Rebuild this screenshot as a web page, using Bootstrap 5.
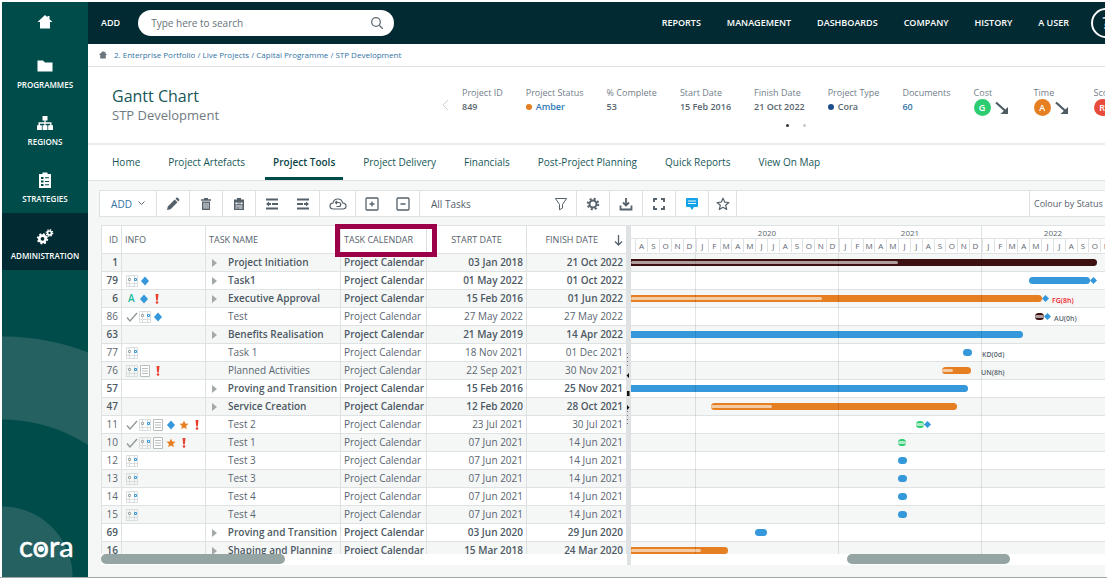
<!DOCTYPE html>
<html lang="en">
<head>
<meta charset="utf-8">
<meta name="viewport" content="width=device-width, initial-scale=1">
<title>Gantt Chart - STP Development</title>
<link href="https://cdn.jsdelivr.net/npm/bootstrap@5.3.0/dist/css/bootstrap.min.css" rel="stylesheet">
<style>
:root{--teal:#004c4b;--navy:#022a33;--line:#dfe2e2;--stripe:#f5f7f7;--ink:#5a6670;--blue:#3498db;--link:#3374a5}
body{font-family:"Open Sans","Noto Sans",sans-serif;font-size:10px;line-height:14px;color:var(--ink);background:#fff}
a{text-decoration:none;color:inherit}
button,select,input{font:inherit;color:inherit;border:0;background:none;padding:0}
svg{display:block;flex:none}
.app-shell{padding:2px 2px 0 2px;border-bottom:1px solid #a2a7a7}

/* sidebar */
.side-nav{width:86px;flex:none;color:#fff;background:radial-gradient(circle at 0 100%,#266161 70px,var(--teal) 71px,var(--teal) 157px,#266161 158px,#266161 240px,var(--teal) 241px)}
.side-link{height:57px;padding-top:15px;gap:4px;font-size:8px;font-weight:600;line-height:12px}
.side-link svg{width:18px;height:18px}
.side-link.home-link{height:40px;padding-top:11px}
.side-link.current{background:var(--navy)}
.brand-logo{font-family:Lato,sans-serif;font-size:29px;line-height:30px;margin:0 0 16px 17px;-webkit-text-stroke:.5px #fff}
.brand-o{position:relative}
.brand-o::after{content:"";position:absolute;left:50%;top:50%;width:6px;height:6px;margin:0 0 0 -3px;border-radius:50%;background:#fff}

/* top bar */
.top-bar{height:42px;flex:none;background:var(--navy);color:#fff;font-size:9px;font-weight:600;padding-left:13px}
.search-box{width:256px;height:26px;border-radius:13px;background:#fff;margin-left:18px;padding:0 10px 0 13px;color:#5f6b74}
.search-box input{outline:0;font-size:10px;font-weight:400}
.search-box input::placeholder{color:#66727a;opacity:1}
.top-menu{gap:26px}
.help-btn{width:30px;height:30px;flex:none;border:2px solid #fff;border-radius:50%;font-size:17px;line-height:24px;font-weight:400;margin:0 -16px 0 22px}
.crumbs{height:23px;flex:none;border-bottom:1px solid var(--line);padding-left:10px;gap:6px;font-size:8px;color:var(--link)}

/* heading strip */
.head-strip{height:78px;flex:none;border-bottom:2px solid #eaecec;padding-left:24px}
.head-title{flex:0 0 330px;padding-top:19px}
.head-title h1{font-size:16px;line-height:20px;font-weight:400;color:#165757;margin:0}
.head-title p{font-size:13px;line-height:18px;color:#6f7a82;margin:0}
.facts{gap:23px;margin-left:13px;padding-top:19px;font-size:9px;white-space:nowrap}
.facts>div{flex:none}
.facts dt{font-weight:400;color:#74808a;line-height:13px}
.facts dd{margin:0;font-weight:600;line-height:16px;gap:4px}
.facts .rag-fact{width:37px}
.status-dot{width:6px;height:6px;border-radius:50%}
.rag{width:17px;height:17px;border-radius:50%;color:#fff;line-height:17px;text-align:center;flex:none}
.pager{gap:14px;margin:8px 0 0 38px}
.pager i{width:3px;height:3px;border-radius:50%;background:#c6cacc}
.pager i:first-child{background:#333}

/* tabs */
.tab-row{height:36px;flex:none;border-bottom:1px solid var(--line);padding-left:16px;gap:12px}
.tab-row a{padding:0 8px;line-height:35px;color:#165757}
.tab-row a.current{font-weight:600;color:#0c4444;box-shadow:inset 0 -3px var(--teal)}

/* toolbar */
.work-area{background:var(--stripe);padding:9px 0 12px 11px}
.tool-row{height:27px;flex:none;background:#fff;border:1px solid var(--line);border-right:0}
.tool-cell{border-right:1px solid var(--line);width:33px;color:#55616b}
.tool-cell.w-pair{width:64px;gap:17px}
.tool-cell.w-add{width:57px;gap:6px;color:var(--link)}
.tool-cell.w-cloud{width:36px}
.tool-cell.w-filter{width:157px;padding:0 8px 0 11px}
.tool-cell.w-star{width:28px}
.tool-cell.w-colour{width:76px;padding-left:4px;font-size:9px;border:0;border-left:1px solid var(--line)}
select.plain{appearance:none;outline:0}

/* grid */
.gantt{margin:8px 0 0 2px;position:relative;background:#fff;min-height:0}
.task-pane{flex:0 0 525px}
.pane-view{overflow:hidden;border-top:1px solid var(--line)}
.task-table{table-layout:fixed;width:526px;border-collapse:separate;border-spacing:0;border-left:1px solid var(--line);white-space:nowrap}
.task-table th,.task-table td{border-right:1px solid var(--line);border-bottom:1px solid var(--line);padding:0 3px;overflow:hidden;height:18px;line-height:17px}
.task-table th{height:28px;font-size:9px;font-weight:400;color:#55616b}
.task-table tbody tr:nth-child(odd),.bar-line:nth-child(odd){background:var(--stripe)}
.task-table .parent-row{font-weight:600;color:#4d5963}
.num-cell{text-align:right}
.name-gap{width:16px;padding-left:3px;margin-right:3px}
.info-icons{gap:1px;margin-left:1px}
.splitter{width:4px;flex:none;background:#dfe2e2;color:#111}
.grip{position:absolute;left:524px;top:120px;width:5px;height:80px}
.scroll-lane{height:11px;flex:none}
.scroll-thumb{height:10px;border-radius:5px;background:#95a5a4}
.marker-box{position:absolute;left:234px;top:-1px;width:102px;height:33px;border:5px solid #9c0048}

/* timeline */
.year-block{width:143px;flex:none;height:28px;border-right:1px solid var(--line);border-bottom:1px solid var(--line);font-size:8px}
.year-block.tail{width:65px}
.year-name{height:13px;line-height:13px;border-bottom:1px solid var(--line)}
.month-cell{flex:1 0 11px;border-left:1px solid var(--line);text-align:center;line-height:13px}
.tail .month-cell{flex:0 0 12px}
.bar-line{height:18px;border-bottom:1px solid var(--line)}
.bar{height:7px;border-radius:4px;flex:none;padding:2px 0}
.bar.from-left{border-radius:0 4px 4px 0}
.bar-done{height:3px;border-radius:2px;background:rgba(255,255,255,.6)}
.milestone{width:5px;height:5px;background:var(--blue);transform:rotate(45deg);margin-left:1px;flex:none}
.bar-note{font-size:7px;font-weight:600;line-height:9px;padding-top:4px}
.year-rules{position:absolute;inset:28px 0 0 0;pointer-events:none}
.year-rules i{width:143px;flex:none;border-right:1px solid rgba(0,0,0,.1)}
.year-rules i:first-child{width:65px}
</style>
</head>
<body>
<svg width="0" height="0" class="position-absolute" aria-hidden="true">
  <symbol id="i-home" viewBox="0 0 18 18"><path fill="currentColor" d="M9 2 1.500 9H4v6.500h10V9h2.500L13.500 6.200V3h-2v1.300z"/></symbol>
  <symbol id="i-folder" viewBox="0 0 18 18"><path fill="currentColor" d="M1.500 3.500h5.500l2 2h7.500v9h-15z"/></symbol>
  <symbol id="i-tree" viewBox="0 0 18 18"><path fill="currentColor" d="M6.500 2h5v4.500h-1.900v1.800h5.900v3h1.500V16h-4.800v-4.700h1.800V9.800H9.600v1.500h1.800V16H6.600v-4.700h1.800V9.800H4v1.500h1.800V16H1v-4.700h1.500v-3h5.900V6.500H6.500z"/></symbol>
  <symbol id="i-list" viewBox="0 0 18 18"><path fill="currentColor" fill-rule="evenodd" d="M3 3h3.500V1.500h5V3H15v14H3zM5 6v2h2.500V6zm4 .300v1h4v-1zM5 9.500v2h2.500v-2zm4 .400v1h4v-1zM5 13v2h2.500v-2zm4 .300v1h4v-1z"/></symbol>
  <symbol id="i-cogs" viewBox="0 0 18 18"><g fill="none" stroke="currentColor"><circle cx="6.500" cy="10.800" r="3.200" stroke-width="2.600"/><circle cx="6.500" cy="10.800" r="4.800" stroke-width="1.800" stroke-dasharray="1.900 1.870"/><circle cx="13.500" cy="5" r="2" stroke-width="1.700"/><circle cx="13.500" cy="5" r="3.200" stroke-width="1.400" stroke-dasharray="1.260 1.253"/></g></symbol>
  <symbol id="i-search" viewBox="0 0 14 14"><g fill="none" stroke="currentColor" stroke-width="1.300"><circle cx="6" cy="6" r="4.300"/><path d="m9.200 9.200 3.600 3.600"/></g></symbol>
  <symbol id="i-pencil" viewBox="0 0 14 14"><path fill="currentColor" d="m1 13 .8-3.600L8.700 2.500l2.800 2.800-6.900 6.900zM9.500 1.700l.9-.9c.5-.5 1-.4 1.400 0l1.400 1.400c.4.400.4.900 0 1.400l-.9.900z"/></symbol>
  <symbol id="i-trash" viewBox="0 0 14 14"><path fill="currentColor" fill-rule="evenodd" d="M5 1h4v1.200h3v1.600H2V2.200h3zM3 4.500h8V13H3zm1.600 1.300v5.900h.9V5.800zm2 0v5.900h.9V5.800zm2 0v5.900h.9V5.800z"/></symbol>
  <symbol id="i-clip" viewBox="0 0 14 14"><path fill="currentColor" fill-rule="evenodd" d="M5 1h4v1.500h3V13H2V2.500h3zM3.500 5.500v1.800h2V5.500zm3 0v1.800h1V5.500zm2 0v1.800h2V5.500zm-5 3v.9h7v-.9zm0 2v1h2v-1zm3 0v1h4v-1z"/></symbol>
  <symbol id="i-outdent" viewBox="0 0 14 14"><path fill="currentColor" d="M1 1.500h12v1.900H1zm0 9h12v1.900H1zM7 6h6v1.900H7zM1 7l3-2.500V6h2v1.900H4v1.600z"/></symbol>
  <symbol id="i-indent" viewBox="0 0 14 14"><path fill="currentColor" d="M1 1.500h12v1.900H1zm0 9h12v1.900H1zM1 6h6v1.900H1zM13 7l-3-2.500V6H8v1.900h2v1.600z"/></symbol>
  <symbol id="i-cloud" viewBox="0 0 18 14"><g fill="none" stroke="currentColor" stroke-width="1.200"><path d="M4.500 12C2.500 12 1 10.700 1 9s1.300-2.900 3-3c.4-2.400 2.300-4 4.800-4 2.400 0 4.300 1.500 4.700 3.800C15.600 6 17 7.300 17 9s-1.400 3-3.300 3z"/><path d="M6.500 5.500h3.200a2 2 0 0 1 0 4H7.500M8 4 6.500 5.500 8 7"/></g></symbol>
  <symbol id="i-plus" viewBox="0 0 14 14"><path fill="none" stroke="currentColor" stroke-width="1.300" d="M2 1h10q1 0 1 1v10q0 1-1 1H2q-1 0-1-1V2q0-1 1-1zm5 3.500v5M4.500 7h5"/></symbol>
  <symbol id="i-minus" viewBox="0 0 14 14"><path fill="none" stroke="currentColor" stroke-width="1.300" d="M2 1h10q1 0 1 1v10q0 1-1 1H2q-1 0-1-1V2q0-1 1-1zm2.500 6h5"/></symbol>
  <symbol id="i-funnel" viewBox="0 0 14 14"><path fill="none" stroke="currentColor" stroke-linejoin="round" d="M1.500 1.500h11L8.500 7.500V11l-3 1.800V7.500z"/></symbol>
  <symbol id="i-gear" viewBox="0 0 14 14"><g fill="none" stroke="currentColor"><circle cx="7" cy="7" r="3.500" stroke-width="2"/><circle cx="7" cy="7" r="5.300" stroke-width="1.900" stroke-dasharray="2.080 2.083"/></g></symbol>
  <symbol id="i-down" viewBox="0 0 14 14"><path fill="none" stroke="currentColor" stroke-width="1.800" d="M7 1v7M4 5.500l3 3 3-3M1.500 8.500v4h11v-4"/></symbol>
  <symbol id="i-full" viewBox="0 0 14 14"><path fill="none" stroke="currentColor" stroke-width="1.900" d="M2 5V2h3m4 0h3v3m0 4v3H9m-4 0H2V9"/></symbol>
  <symbol id="i-chat" viewBox="0 0 14 14"><path fill="#14a3e6" d="M2 1h10q1 0 1 1v7q0 1-1 1H9l-2 3-2-3H2q-1 0-1-1V2q0-1 1-1z"/><path stroke="#fff" stroke-width=".9" d="M3 4h8M3 6.500h8"/></symbol>
  <symbol id="i-star" viewBox="0 0 14 14"><path fill="none" stroke="currentColor" stroke-width="1.200" stroke-linejoin="round" d="m7 1.200 1.700 3.900 4.200.4-3.200 2.800 1 4.200L7 10.300l-3.700 2.200 1-4.200-3.200-2.800 4.200-.4z"/></symbol>
  <symbol id="i-trend" viewBox="0 0 14 14"><path fill="none" stroke="#4f5b63" stroke-width="2.200" d="m1 1.500 10 9"/><path fill="#4f5b63" d="M13 6v7H5.500z"/></symbol>
  <symbol id="i-cal" viewBox="0 0 12 12"><path fill="none" stroke="#dadddd" d="M.5.500h11v11H.5zM3.500 0v12M8.500 0v12M0 8.500h12"/><path fill="#fff" stroke="#a4a9a9" d="M2.500 3.500h2v2h-2z"/><path fill="#fff" stroke="#3498db" d="M8.500 3.500h2v2h-2z"/></symbol>
  <symbol id="i-tick" viewBox="0 0 12 12"><path fill="none" stroke="#8f9696" stroke-width="1.300" d="m1 6.500 3 3.500 7-8"/></symbol>
  <symbol id="i-note" viewBox="0 0 12 12"><path fill="#fff" stroke="#b9bebe" d="M1.500.500h9v11h-9zM3 3.500h6M3 6h6M3 8.500h6"/></symbol>
  <symbol id="i-dia" viewBox="0 0 12 12"><path fill="#3498db" d="m6 1.500 4 4.500-4 4.500L2 6z"/></symbol>
  <symbol id="i-bang" viewBox="0 0 12 12"><path fill="#e8402f" d="M4.500 1h3L6.800 7.500H5.200z"/><circle cx="6" cy="9.500" r="1.300" fill="#e8402f"/></symbol>
  <symbol id="i-gold" viewBox="0 0 12 12"><path fill="#e67e22" d="m6 1.500 1.300 3 3.200.3-2.400 2.200.7 3.300L6 8.600l-2.800 1.700.7-3.300-2.400-2.200 3.200-.3z"/></symbol>
</svg>

<div class="app-shell d-flex vh-100 overflow-hidden">
  <nav class="side-nav d-flex flex-column" aria-label="Sections">
    <a href="#" class="side-link home-link d-flex flex-column align-items-center" aria-label="Home page"><svg><use href="#i-home"/></svg></a>
    <a href="#" class="side-link d-flex flex-column align-items-center"><svg><use href="#i-folder"/></svg>PROGRAMMES</a>
    <a href="#" class="side-link d-flex flex-column align-items-center"><svg><use href="#i-tree"/></svg>REGIONS</a>
    <a href="#" class="side-link d-flex flex-column align-items-center"><svg><use href="#i-list"/></svg>STRATEGIES</a>
    <a href="#" class="side-link current d-flex flex-column align-items-center"><svg><use href="#i-cogs"/></svg>ADMINISTRATION</a>
    <div class="brand-logo mt-auto">c<span class="brand-o">o</span>ra</div>
  </nav>

  <main class="d-flex flex-column flex-grow-1 overflow-hidden">
    <header class="top-bar d-flex align-items-center">
      <a href="#">ADD</a>
      <label class="search-box d-flex align-items-center">
        <input type="search" class="flex-grow-1" placeholder="Type here to search" aria-label="Search">
        <svg width="14" height="14"><use href="#i-search"/></svg>
      </label>
      <nav class="top-menu d-flex ms-auto" aria-label="Main">
        <a href="#">REPORTS</a><a href="#">MANAGEMENT</a><a href="#">DASHBOARDS</a><a href="#">COMPANY</a><a href="#">HISTORY</a><a href="#">A USER</a>
      </nav>
      <button type="button" class="help-btn">?</button>
    </header>

    <div class="crumbs d-flex align-items-center">
      <svg width="10" height="10" class="text-secondary"><use href="#i-home"/></svg>
      <span><a href="#">2. Enterprise Portfolio</a> / <a href="#">Live Projects</a> / <a href="#">Capital Programme</a> / <a href="#">STP Development</a></span>
    </div>

    <section class="head-strip d-flex">
      <div class="head-title"><h1>Gantt Chart</h1><p>STP Development</p></div>
      <button type="button" aria-label="Previous"><svg width="7" height="12" viewBox="0 0 7 12"><path d="M6 1 1 6l5 5" fill="none" stroke="#ccd0d2"/></svg></button>
      <div class="flex-grow-1 overflow-hidden">
        <dl class="facts d-flex mb-0">
          <div><dt>Project ID</dt><dd>849</dd></div>
          <div><dt>Project Status</dt><dd class="d-flex align-items-center"><span class="status-dot" style="background:#e67e22"></span><a href="#" style="color:#2f79b5">Amber</a></dd></div>
          <div><dt>% Complete</dt><dd>53</dd></div>
          <div><dt>Start Date</dt><dd>15 Feb 2016</dd></div>
          <div><dt>Finish Date</dt><dd>21 Oct 2022</dd></div>
          <div><dt>Project Type</dt><dd class="d-flex align-items-center"><span class="status-dot" style="background:#1e4f8c"></span>Cora</dd></div>
          <div><dt>Documents</dt><dd><a href="#" style="color:#3374a5">60</a></dd></div>
          <div class="rag-fact"><dt>Cost</dt><dd class="d-flex align-items-center"><span class="rag" style="background:#2ecc71">G</span><svg width="14" height="14"><use href="#i-trend"/></svg></dd></div>
          <div class="rag-fact"><dt>Time</dt><dd class="d-flex align-items-center"><span class="rag" style="background:#e67e22">A</span><svg width="14" height="14"><use href="#i-trend"/></svg></dd></div>
          <div class="rag-fact"><dt>Scope</dt><dd class="d-flex align-items-center"><span class="rag" style="background:#e74c3c">R</span></dd></div>
        </dl>
        <div class="pager d-flex justify-content-center"><i></i><i></i></div>
      </div>
    </section>

    <nav class="tab-row d-flex" aria-label="Project">
      <a href="#">Home</a><a href="#">Project Artefacts</a><a href="#" class="current">Project Tools</a><a href="#">Project Delivery</a><a href="#">Financials</a><a href="#">Post-Project Planning</a><a href="#">Quick Reports</a><a href="#">View On Map</a>
    </nav>

    <section class="work-area d-flex flex-column flex-grow-1 overflow-hidden">
      <div class="tool-row d-flex">
        <button type="button" class="tool-cell w-add d-flex align-items-center justify-content-center">ADD <svg width="7" height="5" viewBox="0 0 7 5"><path d="m.5.500 3 3 3-3" fill="none" stroke="#55616b"/></svg></button>
        <button type="button" class="tool-cell d-flex align-items-center justify-content-center" aria-label="Edit"><svg width="14" height="14"><use href="#i-pencil"/></svg></button>
        <button type="button" class="tool-cell d-flex align-items-center justify-content-center" aria-label="Delete"><svg width="14" height="14"><use href="#i-trash"/></svg></button>
        <button type="button" class="tool-cell d-flex align-items-center justify-content-center" aria-label="Paste"><svg width="14" height="14"><use href="#i-clip"/></svg></button>
        <div class="tool-cell w-pair d-flex align-items-center justify-content-center">
          <button type="button" aria-label="Outdent"><svg width="14" height="14"><use href="#i-outdent"/></svg></button>
          <button type="button" aria-label="Indent"><svg width="14" height="14"><use href="#i-indent"/></svg></button>
        </div>
        <button type="button" class="tool-cell w-cloud d-flex align-items-center justify-content-center" aria-label="Restore"><svg width="18" height="14"><use href="#i-cloud"/></svg></button>
        <div class="tool-cell w-pair d-flex align-items-center justify-content-center">
          <button type="button" aria-label="Expand all"><svg width="14" height="14"><use href="#i-plus"/></svg></button>
          <button type="button" aria-label="Collapse all"><svg width="14" height="14"><use href="#i-minus"/></svg></button>
        </div>
        <div class="tool-cell w-filter d-flex align-items-center justify-content-between">
          <select class="plain" aria-label="Task filter"><option>All Tasks</option></select>
          <svg width="14" height="14"><use href="#i-funnel"/></svg>
        </div>
        <button type="button" class="tool-cell d-flex align-items-center justify-content-center" aria-label="Settings"><svg width="14" height="14"><use href="#i-gear"/></svg></button>
        <button type="button" class="tool-cell d-flex align-items-center justify-content-center" aria-label="Download"><svg width="14" height="14"><use href="#i-down"/></svg></button>
        <button type="button" class="tool-cell d-flex align-items-center justify-content-center" aria-label="Full screen"><svg width="14" height="14"><use href="#i-full"/></svg></button>
        <button type="button" class="tool-cell d-flex align-items-center justify-content-center" aria-label="Comments"><svg width="14" height="14"><use href="#i-chat"/></svg></button>
        <button type="button" class="tool-cell w-star d-flex align-items-center justify-content-center" aria-label="Favourite"><svg width="14" height="14"><use href="#i-star"/></svg></button>
        <select class="tool-cell w-colour plain ms-auto" aria-label="Bar colours"><option>Colour by Status</option></select>
      </div>

      <div class="gantt d-flex flex-grow-1">
        <div class="task-pane d-flex flex-column">
          <div class="pane-view flex-grow-1">
            <table class="task-table">
              <colgroup><col style="width:20px"><col style="width:84px"><col style="width:135px"><col style="width:86px"><col style="width:100px"><col style="width:100px"></colgroup>
              <thead><tr>
                <th class="text-end">ID</th><th>INFO</th><th>TASK NAME</th><th>TASK CALENDAR</th><th class="text-center">START DATE</th>
                <th><div class="d-flex align-items-center justify-content-end gap-3">FINISH DATE <svg width="9" height="12" viewBox="0 0 9 12"><path d="M4.500 1v10M1 7.500 4.500 11 8 7.500" fill="none" stroke="#55616b" stroke-width="1.300"/></svg></div></th>
              </tr></thead>
              <tbody id="taskRows"></tbody>
            </table>
          </div>
          <div class="scroll-lane"><div class="scroll-thumb" style="width:35%"></div></div>
        </div>
        <div class="splitter"></div>
        <svg class="grip" viewBox="0 0 5 80"><path stroke="#777" stroke-dasharray="1 3" d="M2.500 8v14M2.500 66v14"/><path fill="#111" d="M4 28v5L1.500 30.500zM2 46h2.500v5H2zM2 60v5l2.500-2.500z"/></svg>
        <div class="d-flex flex-column flex-grow-1 overflow-hidden">
          <div class="pane-view flex-grow-1 position-relative">
            <div id="yearHeads" class="d-flex"></div>
            <div id="barLines"></div>
            <div class="year-rules d-flex"><i></i><i></i><i></i></div>
          </div>
          <div class="scroll-lane"><div class="scroll-thumb" style="margin-left:216px;width:163px"></div></div>
        </div>
        <div class="marker-box"></div>
      </div>
    </section>
  </main>
</div>

<script src="https://cdn.jsdelivr.net/npm/bootstrap@5.3.0/dist/js/bootstrap.bundle.min.js"></script>
<script>
const COLOURS = {dark:'#3d1011', blue:'#3498db', orange:'#e67e22', green:'#2ecc71'};
// id, info icons, name, parent?, start, finish, bar [colour, from, to, done-to], milestone?, note [text, gap, colour]
const TASKS = [
  [1,'','Project Initiation',1,'03 Jan 2018','21 Oct 2022',['dark',0,466,267]],
  [79,'cal dia','Task1',1,'01 May 2022','01 Oct 2022',['blue',398,459],1],
  [6,'A dia bang','Executive Approval',1,'15 Feb 2016','01 Jun 2022',['orange',0,411,191],1,['FG(8h)',4,'#f0202a']],
  [86,'tick cal dia','Test',0,'27 May 2022','27 May 2022',['dark',404,413,413],1,['AU(0h)',4]],
  [63,'','Benefits Realisation',1,'21 May 2019','14 Apr 2022',['blue',0,392]],
  [77,'cal','Task 1',0,'18 Nov 2021','01 Dec 2021',['blue',332,341],0,['KD(0d)',10]],
  [76,'cal note bang','Planned Activities',0,'22 Sep 2021','30 Nov 2021',['orange',311,340,322],0,['UN(8h)',10]],
  [57,'','Proving and Transition',1,'15 Feb 2016','25 Nov 2021',['blue',0,337]],
  [47,'','Service Creation',1,'12 Feb 2020','28 Oct 2021',['orange',80,326,141]],
  [11,'tick cal note dia gold bang','Test 2',0,'23 Jul 2021','30 Jul 2021',['green',285,293,293],1],
  [10,'tick cal note gold bang','Test 1',0,'07 Jun 2021','14 Jun 2021',['green',267,275,275]],
  [12,'cal','Test 3',0,'07 Jun 2021','14 Jun 2021',['blue',267,276]],
  [13,'cal','Test 3',0,'07 Jun 2021','14 Jun 2021',['blue',267,276]],
  [14,'cal','Test 4',0,'07 Jun 2021','14 Jun 2021',['blue',267,276]],
  [15,'cal','Test 4',0,'07 Jun 2021','14 Jun 2021',['blue',267,276]],
  [69,'','Proving and Transition',1,'03 Jun 2020','29 Jun 2020',['blue',124,136]],
  [16,'','Shaping and Planning',1,'15 Mar 2018','24 Mar 2020',['orange',0,97,70]]
];
const icon = n => n === 'A' ? '<span style="color:#1abc9c;font-weight:600;padding:0 2px">A</span>'
  : `<svg width="12" height="12"><use href="#i-${n}"/></svg>`;
const arrow = '<svg width="5" height="8" viewBox="0 0 5 8"><path fill="#a3a9a9" d="M0 0v8l5-4z"/></svg>';
taskRows.innerHTML = TASKS.map(([id, info, name, parent, start, end]) => `<tr class="${parent ? 'parent-row' : ''}">
  <td class="num-cell">${id}</td>
  <td><div class="info-icons d-flex align-items-center">${info ? info.split(' ').map(icon).join('') : ''}</div></td>
  <td><div class="d-flex align-items-center"><span class="name-gap">${parent ? arrow : ''}</span>${name}</div></td>
  <td>Project Calendar</td><td class="num-cell">${start}</td><td class="num-cell">${end}</td></tr>`).join('');
barLines.innerHTML = TASKS.map(t => {
  const [colour, from, to, done] = t[6], note = t[8];
  return `<div class="bar-line d-flex align-items-center">
    <div class="bar ${from ? '' : 'from-left'}" style="margin-left:${from}px;width:${to - from}px;background:${COLOURS[colour]}">${done ? `<div class="bar-done" style="width:${done - from}px"></div>` : ''}</div>
    ${t[7] ? '<span class="milestone"></span>' : ''}${note ? `<span class="bar-note" style="margin-left:${note[1]}px;color:${note[2] || 'inherit'}">${note[0]}</span>` : ''}</div>`;
}).join('');
const months = s => [...s].map(m => `<span class="month-cell">${m}</span>`).join('');
yearHeads.innerHTML = `<div class="year-block tail"><div class="year-name"></div><div class="d-flex justify-content-end">${months('ASOND')}</div></div>` +
  [2020, 2021, 2022].map(y => `<div class="year-block"><div class="year-name text-center">${y}</div><div class="d-flex">${months('JFMAMJJASOND')}</div></div>`).join('');
</script>
</body>
</html>
